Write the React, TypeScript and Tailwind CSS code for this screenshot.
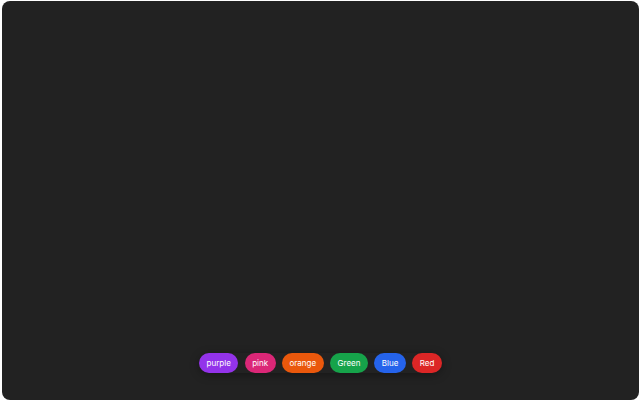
const CHIPS = [
  { label: "purple", cls: "bg-[#9333ea]" },
  { label: "pink", cls: "bg-[#db2777]" },
  { label: "orange", cls: "bg-[#ea580c]" },
  { label: "Green", cls: "bg-[#16a34a]" },
  { label: "Blue", cls: "bg-[#2563eb]" },
  { label: "Red", cls: "bg-[#dc2626]" },
];

export default function App() {
  return (
    <div className="h-[402px] w-[642px] bg-white pl-[2px] pr-[3px] pt-[1px] pb-[2px]">
      <div
        className="flex h-full w-full flex-col items-center justify-end rounded-lg bg-[#222222] pb-[27px]"
        style={{ fontFamily: "Inter, 'Liberation Sans', sans-serif" }}
      >
        <div className="flex items-center gap-[6.4px] rounded-full shadow-[0_2px_10px_rgba(0,0,0,0.35)]">
          {CHIPS.map((c) => (
            <button
              key={c.label}
              className={`${c.cls} h-[20px] rounded-full px-[7.5px] text-[8px] leading-none text-white`}
            >
              {c.label}
            </button>
          ))}
        </div>
      </div>
    </div>
  );
}
